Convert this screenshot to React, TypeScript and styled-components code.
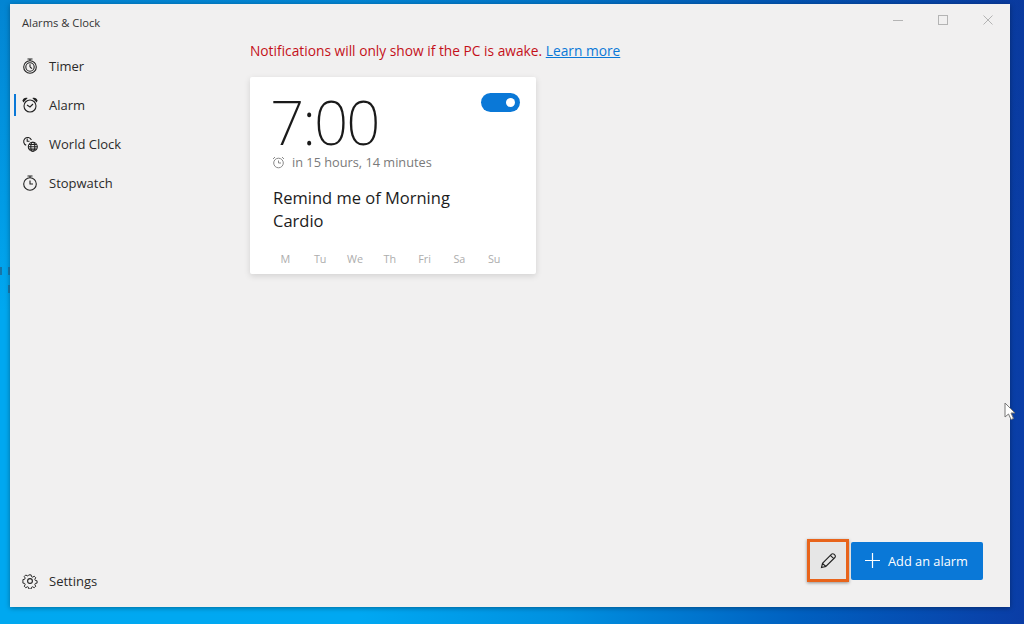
import React from "react";
import styled, { createGlobalStyle } from "styled-components";

const Global = createGlobalStyle`
  html, body { margin: 0; padding: 0; width: 1024px; height: 624px; overflow: hidden; }
  body { font-family: "Open Sans", "Noto Sans", "Liberation Sans", sans-serif; }
`;

const Desktop = styled.div`
  position: relative;
  box-sizing: border-box;
  width: 1024px;
  height: 624px;
  padding: 4px 14px 17px 10px;
  background:
    linear-gradient(180deg, rgba(10, 50, 140, 0.3), rgba(10, 50, 140, 0) 50%),
    linear-gradient(90deg, #00a8f0 0%, #00a8f2 35%, #0090e0 55%, #0060c0 78%, #0a3da6 100%);
`;

const Window = styled.div`
  box-sizing: border-box;
  height: 603px;
  display: flex;
  flex-direction: column;
  background: #f1f0f0;
  box-shadow: 0 1px 5px rgba(0, 0, 0, 0.35);
`;

const TitleBar = styled.div`
  height: 37px;
  flex: none;
  display: flex;
  align-items: center;
  justify-content: space-between;
  padding: 0 17px 0 12px;
`;

const Title = styled.span`
  font-size: 11.2px;
  color: #333;
`;

const WindowControls = styled.div`
  display: flex;
  align-items: center;
  gap: 35px;
  color: #b4b4b4;
  margin-top: -6px;
`;

const Body = styled.div`
  flex: 1;
  min-height: 0;
  display: flex;
`;

const Sidebar = styled.nav`
  width: 240px;
  flex: none;
  display: flex;
  flex-direction: column;
  padding-top: 5px;
  padding-bottom: 7px;
  box-sizing: border-box;
`;

const NavItem = styled.div<{ $active?: boolean }>`
  position: relative;
  height: 39px;
  display: flex;
  align-items: center;
  gap: 11px;
  padding-left: 12px;
  font-size: 13px;
  color: #2b2b2b;
  &::before {
    content: "";
    display: ${(p) => (p.$active ? "block" : "none")};
    position: absolute;
    left: 4px;
    top: 9px;
    width: 2px;
    height: 22px;
    background: #0a78d7;
  }
`;

const NavIcon = styled.svg`
  width: 16px;
  height: 16px;
  flex: none;
  fill: none;
  stroke: #222;
  stroke-width: 1.1;
`;

const Spacer = styled.div`
  flex: 1;
`;

const Main = styled.main`
  flex: 1;
  min-width: 0;
  display: flex;
  flex-direction: column;
  padding: 0 27px 25px 0;
`;

const Notice = styled.div`
  font-size: 13.75px;
  line-height: 20px;
  color: #c4101a;
`;

const LearnMore = styled.a`
  color: #0a78d7;
  text-decoration: underline;
`;

const Card = styled.section`
  box-sizing: border-box;
  margin-top: 16px;
  width: 286px;
  height: 197px;
  background: #fff;
  border-radius: 2px;
  box-shadow: 0 2px 6px rgba(0, 0, 0, 0.13);
  padding: 14px 16px 0 22px;
  position: relative;
`;

const CardTop = styled.div`
  display: flex;
  justify-content: space-between;
  align-items: flex-start;
`;

const Time = styled.div`
  font-family: "Noto Sans", "Open Sans", sans-serif;
  font-weight: 200;
  font-size: 60px;
  line-height: 56px;
  letter-spacing: -2px;
  color: #1a1a1a;
  margin: 3px 0 0 -2px;
`;

const Toggle = styled.div`
  width: 39px;
  height: 19px;
  margin-top: 2px;
  border-radius: 10px;
  background: #0a78d7;
  display: flex;
  align-items: center;
  justify-content: flex-end;
  padding-right: 5px;
  box-sizing: border-box;
  &::after {
    content: "";
    width: 9px;
    height: 9px;
    border-radius: 50%;
    background: #fff;
  }
`;

const Countdown = styled.div`
  display: flex;
  align-items: center;
  gap: 7px;
  font-size: 12.75px;
  line-height: 16px;
  color: #7a7a7a;
  margin-top: 4px;
`;

const AlarmName = styled.div`
  margin: 16px 0 0 1px;
  width: 200px;
  font-size: 16.5px;
  line-height: 23px;
  color: #1c1c1c;
`;

const Days = styled.div`
  position: absolute;
  left: 18px;
  bottom: 8px;
  display: flex;
  color: #adadad;
  font-size: 10.8px;
  line-height: 14px;
`;

const Day = styled.span`
  width: 34.8px;
  text-align: center;
`;

const ActionBar = styled.div`
  display: flex;
  justify-content: flex-end;
  align-items: center;
  gap: 2px;
`;

const EditButton = styled.button`
  box-sizing: border-box;
  width: 42px;
  height: 43px;
  background: #e6e6e6;
  border: 3px solid #e8641b;
  box-shadow: 0 1px 3px rgba(0, 0, 0, 0.4);
  display: flex;
  align-items: center;
  justify-content: center;
  padding: 0;
`;

const AddButton = styled.button`
  box-sizing: border-box;
  width: 132px;
  height: 38px;
  background: #0a78d7;
  border: none;
  border-radius: 2px;
  color: #fff;
  font-family: inherit;
  font-size: 12.8px;
  display: flex;
  align-items: center;
  gap: 8px;
  padding: 0 0 0 14px;
`;

const Content = styled.div`
  flex: 1;
`;

const Cursor = styled.svg`
  position: absolute;
  left: 1004px;
  top: 402px;
  width: 13px;
  height: 19px;
`;

const Speck = styled.span<{ $top: number; $left: number }>`
  position: absolute;
  left: ${(p) => p.$left}px;
  top: ${(p) => p.$top}px;
  width: 2px;
  height: 8px;
  background: #2a4f6e;
  opacity: 0.55;
`;

export default function App() {
  return (
    <Desktop>
      <Global />
      <Window>
        <TitleBar>
          <Title>Alarms &amp; Clock</Title>
          <WindowControls>
            <svg width="10" height="10" viewBox="0 0 10 10"><path d="M0 5.5H10" stroke="currentColor" /></svg>
            <svg width="10" height="10" viewBox="0 0 10 10"><rect x=".5" y=".5" width="9" height="9" fill="none" stroke="currentColor" /></svg>
            <svg width="10" height="10" viewBox="0 0 10 10"><path d="M.5.5l9 9M9.5.5l-9 9" stroke="currentColor" /></svg>
          </WindowControls>
        </TitleBar>
        <Body>
          <Sidebar>
            <NavItem>
              <NavIcon viewBox="0 0 16 16">
                <circle cx="8" cy="9" r="6.3" />
                <circle cx="8" cy="9" r="4.2" />
                <path d="M5.5 1h5M8 1v1.8M8 9V6.2M8 9l2 1.6" />
              </NavIcon>
              Timer
            </NavItem>
            <NavItem $active>
              <NavIcon viewBox="0 0 16 16">
                <circle cx="8" cy="9" r="6" />
                <path d="M1 3.5C1.6 1.8 3 1 4.6 1.3L1.5 4.6zM15 3.5C14.4 1.8 13 1 11.4 1.3l3.1 3.3z" fill="#222" stroke="#222" />
                <path d="M5 8l3 2 3-3" />
              </NavIcon>
              Alarm
            </NavItem>
            <NavItem>
              <NavIcon viewBox="0 0 16 16">
                <path d="M4.2 9.2A4 4 0 1 1 9.4 4" />
                <path d="M5.2 2.6v2.7H7.5" />
                <circle cx="10.8" cy="10.8" r="4.5" />
                <ellipse cx="10.8" cy="10.8" rx="2" ry="4.5" />
                <path d="M6.3 10.8h9M7 8.5h7.6M7 13.1h7.6" />
              </NavIcon>
              World Clock
            </NavItem>
            <NavItem>
              <NavIcon viewBox="0 0 16 16">
                <circle cx="8" cy="9" r="6.3" />
                <path d="M5.5 1h5M8 1v1.8M8 5.5V9h3" />
              </NavIcon>
              Stopwatch
            </NavItem>
            <Spacer />
            <NavItem>
              <NavIcon viewBox="0 0 16 16">
                <path d="M6.7 1h2.6l.4 2 1.4.6 1.7-1.1 1.8 1.8-1.1 1.7.6 1.4 2 .4v2.6l-2 .4-.6 1.4 1.1 1.7-1.8 1.8-1.7-1.1-1.4.6-.4 2H6.7l-.4-2-1.4-.6-1.7 1.1-1.8-1.8 1.1-1.7-.6-1.4-2-.4V6.4l2-.4.6-1.4-1.1-1.7 1.8-1.8 1.7 1.1 1.4-.6z" transform="translate(1 1) scale(.875)" />
                <circle cx="8" cy="8" r="2.4" />
              </NavIcon>
              Settings
            </NavItem>
          </Sidebar>
          <Main>
            <Notice>
              Notifications will only show if the PC is awake. <LearnMore>Learn more</LearnMore>
            </Notice>
            <Card>
              <CardTop>
                <Time>7:00</Time>
                <Toggle />
              </CardTop>
              <Countdown>
                <svg width="13" height="13" viewBox="0 0 13 13" fill="none" stroke="#8a8a8a">
                  <circle cx="6.5" cy="7" r="4.8" />
                  <path d="M1 3l2-2M12 3l-2-2M6.5 4.5V7H9" />
                </svg>
                in 15 hours, 14 minutes
              </Countdown>
              <AlarmName>Remind me of Morning Cardio</AlarmName>
              <Days>
                {["M", "Tu", "We", "Th", "Fri", "Sa", "Su"].map((d) => (
                  <Day key={d}>{d}</Day>
                ))}
              </Days>
            </Card>
            <Content />
            <ActionBar>
              <EditButton aria-label="Edit">
                <svg width="17" height="17" viewBox="0 0 17 17" fill="none" stroke="#222" strokeWidth="1.1">
                  <path d="M1.5 15.5l1-4.2L11.6 2.2a1.6 1.6 0 0 1 2.3 0l1 1a1.6 1.6 0 0 1 0 2.3l-9.1 9zM2.5 11.3l3.3 3.2M10.4 3.4l3.3 3.2" />
                </svg>
              </EditButton>
              <AddButton>
                <svg width="15" height="15" viewBox="0 0 15 15" stroke="#fff" strokeWidth="1.2"><path d="M7.5 0v15M0 7.5h15" /></svg>
                Add an alarm
              </AddButton>
            </ActionBar>
          </Main>
        </Body>
      </Window>
      <Speck $top={267} $left={8} />
      <Speck $top={267} $left={0} />
      <Speck $top={285} $left={8} />
      <Cursor viewBox="0 0 13 19">
        <path d="M1 1v14l3.5-3 2.5 5.5 2.5-1-2.5-5.5H11z" fill="#fff" stroke="#777" strokeWidth="1" />
      </Cursor>
    </Desktop>
  );
}
